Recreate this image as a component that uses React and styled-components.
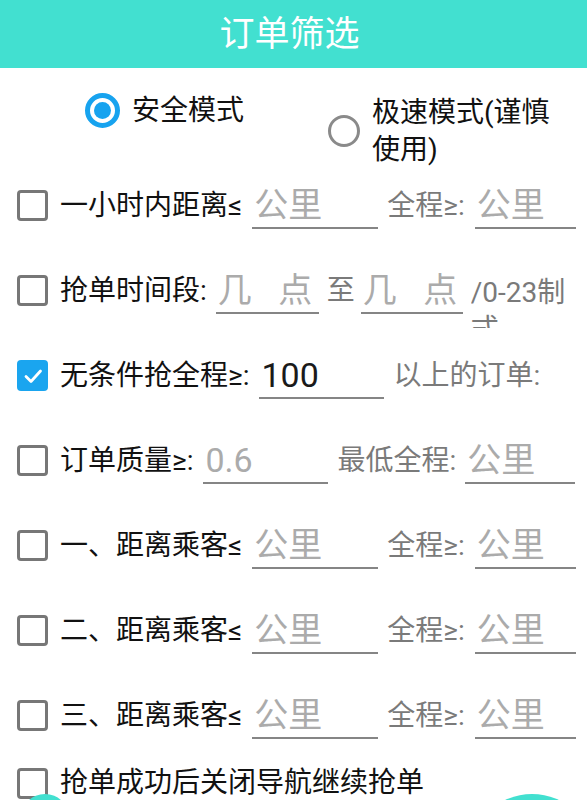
import styled, { createGlobalStyle } from "styled-components";

const GlobalStyle = createGlobalStyle`
  html, body {
    margin: 0;
    padding: 0;
    background: #fff;
    overflow: hidden;
  }
  body {
    font-family: Roboto, "Noto Sans CJK SC", sans-serif;
  }
`;

function CheckBox({ checked }) {
  return (
    <Box $checked={checked}>
      {checked && (
        <svg width="22" height="22" viewBox="0 0 22 22">
          <polyline
            points="4,11.5 9,16.5 18.5,6"
            fill="none"
            stroke="#fff"
            strokeWidth="2.8"
            strokeLinecap="round"
            strokeLinejoin="round"
          />
        </svg>
      )}
    </Box>
  );
}

function App() {
  return (
    <Page>
      <GlobalStyle />
      <Header>订单筛选</Header>

      <RadioGroup>
        <RadioItem>
          <Radio $on />
          <RadioText>安全模式</RadioText>
        </RadioItem>
        <RadioItem $wide>
          <Radio />
          <RadioText $w={190}>极速模式(谨慎使用)</RadioText>
        </RadioItem>
      </RadioGroup>

      <Row>
        <CheckBox />
        <Label>一小时内距离≤</Label>
        <Field $w={126} $ml={10} placeholder="公里" />
        <Hint $ml={9}>全程≥:</Hint>
        <Field $w={101} $ml={10} placeholder="公里" />
      </Row>

      <Row>
        <CheckBox />
        <Label>抢单时间段:</Label>
        <Field $w={103} $ml={9} $ls={9} placeholder="几 点" />
        <Hint $ml={8}>至</Hint>
        <Field $w={102} $ml={6} $ls={9} placeholder="几 点" />
        <Note>/0-23制式</Note>
      </Row>

      <Row>
        <CheckBox checked />
        <Label>无条件抢全程≥:</Label>
        <Field $w={125} $ml={10} defaultValue="100" />
        <Hint $ml={9}>以上的订单:</Hint>
      </Row>

      <Row>
        <CheckBox />
        <Label>订单质量≥:</Label>
        <Field $w={125} $ml={10} placeholder="0.6" />
        <Hint $ml={9}>最低全程:</Hint>
        <Field $w={110} $ml={9} placeholder="公里" />
      </Row>

      {["一", "二", "三"].map((n) => (
        <Row key={n}>
          <CheckBox />
          <Label>{n}、距离乘客≤</Label>
          <Field $w={126} $ml={10} placeholder="公里" />
          <Hint $ml={9}>全程≥:</Hint>
          <Field $w={101} $ml={10} placeholder="公里" />
        </Row>
      ))}

      <Row $h={36} $pt={14}>
        <CheckBox />
        <Label>抢单成功后关闭导航继续抢单</Label>
      </Row>

      <Footer>
        <RoundButton $size={48} $x={21} />
        <RoundButton $size={126} $x={469} />
      </Footer>
    </Page>
  );
}

export default App;

const Page = styled.div`
  width: 587px;
  height: 800px;
  overflow: hidden;
  background: #fff;
`;

const Header = styled.div`
  height: 68px;
  background: #42e0d0;
  color: #fff;
  font-family: "Noto Sans CJK SC", sans-serif;
  font-size: 35px;
  display: flex;
  justify-content: center;
  align-items: center;
  padding: 0 8px 8px 0;
  box-sizing: border-box;
`;

const RadioGroup = styled.div`
  display: flex;
  align-items: flex-start;
  margin-top: 24px;
  height: 71px;
  padding-left: 85px;
  gap: 84px;
`;

const RadioItem = styled.div`
  display: flex;
  align-items: center;
  gap: 12px;
  margin-top: ${(p) => (p.$wide ? "2px" : "0")};
`;

const Radio = styled.span`
  box-sizing: border-box;
  width: ${(p) => (p.$on ? 35 : 32)}px;
  height: ${(p) => (p.$on ? 35 : 32)}px;
  border-radius: 50%;
  border: ${(p) => (p.$on ? "5px solid #17a3ef" : "3px solid #8a8a8a")};
  display: flex;
  align-items: center;
  justify-content: center;
  flex-shrink: 0;

  &::after {
    content: "";
    display: ${(p) => (p.$on ? "block" : "none")};
    width: 17px;
    height: 17px;
    border-radius: 50%;
    background: #17a3ef;
  }
`;

const RadioText = styled.span`
  font-size: 28px;
  line-height: 37px;
  color: #111;
  width: ${(p) => (p.$w ? `${p.$w}px` : "auto")};
`;

const Row = styled.div`
  box-sizing: border-box;
  display: flex;
  align-items: center;
  height: ${(p) => p.$h || 85}px;
  padding: ${(p) => p.$pt || 0}px 0 0 17px;
  white-space: nowrap;
`;

const Box = styled.span`
  box-sizing: border-box;
  width: 31px;
  height: 31px;
  border-radius: 4px;
  flex-shrink: 0;
  display: flex;
  align-items: center;
  justify-content: center;
  background: ${(p) => (p.$checked ? "#1aa5ef" : "#fff")};
  border: ${(p) => (p.$checked ? "none" : "3px solid #777")};
`;

const Label = styled.span`
  font-size: 28px;
  line-height: 1.2;
  color: #111;
  margin-left: 12px;
`;

const Hint = styled.span`
  font-size: 28px;
  line-height: 1.2;
  color: #7a7a7a;
  margin-left: ${(p) => p.$ml}px;
`;

const Field = styled.input`
  box-sizing: border-box;
  width: ${(p) => p.$w}px;
  height: 47px;
  margin: 0 0 0 ${(p) => p.$ml}px;
  padding: 0 0 0 2px;
  border: none;
  border-bottom: 2px solid #858585;
  background: transparent;
  outline: none;
  font-family: Roboto, "Noto Sans CJK SC", sans-serif;
  font-size: 34px;
  color: #1a1a1a;
  flex-shrink: 0;

  &::placeholder {
    color: #ababab;
    letter-spacing: ${(p) => p.$ls || 0}px;
  }
`;

const Note = styled.span`
  width: 103px;
  height: 54px;
  margin: 20px 0 0 8px;
  font-size: 28px;
  line-height: 37px;
  color: #7a7a7a;
  white-space: normal;
  word-break: break-all;
  overflow: hidden;
`;

const Footer = styled.div`
  position: relative;
  height: 130px;
`;

const RoundButton = styled.span`
  position: absolute;
  top: 0;
  left: ${(p) => p.$x}px;
  width: ${(p) => p.$size}px;
  height: ${(p) => p.$size}px;
  border-radius: 50%;
  background: #42e0d0;
`;
